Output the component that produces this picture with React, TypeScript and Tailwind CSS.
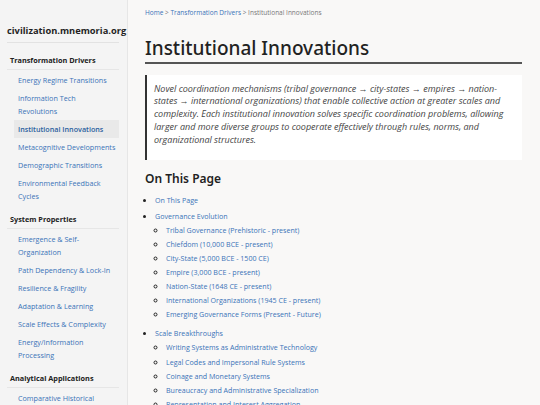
import React from "react";

const sections: { title: string; items: { label: string; active?: boolean; nowrap?: boolean }[] }[] = [
  {
    title: "Transformation Drivers",
    items: [
      { label: "Energy Regime Transitions" },
      { label: "Information Tech Revolutions" },
      { label: "Institutional Innovations", active: true },
      { label: "Metacognitive Developments", nowrap: true },
      { label: "Demographic Transitions" },
      { label: "Environmental Feedback Cycles" },
    ],
  },
  {
    title: "System Properties",
    items: [
      { label: "Emergence & Self-Organization" },
      { label: "Path Dependency & Lock-In" },
      { label: "Resilience & Fragility" },
      { label: "Adaptation & Learning" },
      { label: "Scale Effects & Complexity" },
      { label: "Energy/Information Processing" },
    ],
  },
  {
    title: "Analytical Applications",
    items: [{ label: "Comparative Historical Analysis" }],
  },
];

const toc: { label: string; children?: string[] }[] = [
  { label: "On This Page" },
  {
    label: "Governance Evolution",
    children: [
      "Tribal Governance (Prehistoric - present)",
      "Chiefdom (10,000 BCE - present)",
      "City-State (5,000 BCE - 1500 CE)",
      "Empire (3,000 BCE - present)",
      "Nation-State (1648 CE - present)",
      "International Organizations (1945 CE - present)",
      "Emerging Governance Forms (Present - Future)",
    ],
  },
  {
    label: "Scale Breakthroughs",
    children: [
      "Writing Systems as Administrative Technology",
      "Legal Codes and Impersonal Rule Systems",
      "Coinage and Monetary Systems",
      "Bureaucracy and Administrative Specialization",
      "Representation and Interest Aggregation",
    ],
  },
];

export default function App() {
  return (
    <div
      className="flex w-[540px] h-[405px] overflow-hidden bg-[#f9f8f7]"
      style={{ fontFamily: '"Open Sans", "Noto Sans", sans-serif' }}
    >
      <aside className="w-[128px] shrink-0 h-full bg-[#f4f4f4] border-r border-[#e6e6e6] pl-[7px] pr-[8px] pt-[23px] overflow-hidden">
        <div className="text-[9.3px] font-bold text-[#1f1f1f] leading-[16px] pb-[3px] border-b border-[#e2e2e2] whitespace-nowrap">
          civilization.mnemoria.org
        </div>
        {sections.map((s, i) => (
          <div key={s.title}>
            <div
              className={
                (i === 0 ? "mt-[11px] " : "mt-[8px] ") +
                "text-[7.3px] font-bold text-[#222] leading-[12px] pb-[3px] border-b border-[#e6e6e6] pl-[3px]"
              }
            >
              {s.title}
            </div>
            <ul className="mt-[1px] ml-[7px]">
              {s.items.map((it) => (
                <li
                  key={it.label}
                  className={
                    "text-[7.2px] leading-[13px] py-[2.5px] pl-[4px] pr-[4px] " +
                    (it.nowrap ? "whitespace-nowrap " : "") +
                    (it.active ? "bg-[#e9e9e9] text-[#2b5f9e] font-semibold" : "text-[#3a73b8]")
                  }
                >
                  {it.label}
                </li>
              ))}
            </ul>
          </div>
        ))}
      </aside>
      <main className="flex-1 pl-[17px] pr-[18px] pt-[8px] overflow-hidden">
        <div className="text-[6.5px] leading-[10px] text-[#777]">
          <span className="text-[#3a73b8]">Home</span> &gt;{" "}
          <span className="text-[#3a73b8]">Transformation Drivers</span> &gt; Institutional Innovations
        </div>
        <h1
          className="mt-[18px] text-[19px] leading-[24px] font-medium text-[#222] pb-[2px] border-b-2 border-[#555]"
          style={{ fontFamily: '"Noto Sans", "Open Sans", sans-serif' }}
        >
          Institutional Innovations
        </h1>
        <blockquote className="mt-[11px] bg-white border-l-2 border-[#333] pl-[7px] pr-[12px] pt-[7.5px] pb-[14px] italic text-[9px] leading-[12.8px] text-[#444]">
          Novel coordination mechanisms (tribal governance → city-states → empires → nation-states → international
          organizations) that enable collective action at greater scales and complexity. Each institutional
          innovation solves specific coordination problems, allowing larger and more diverse groups to cooperate
          effectively through rules, norms, and organizational structures.
        </blockquote>
        <h2
          className="mt-[11px] text-[12px] leading-[16px] font-semibold text-[#222]"
          style={{ fontFamily: '"Noto Sans", "Open Sans", sans-serif' }}
        >
          On This Page
        </h2>
        <ul className="mt-[6px] list-disc pl-[10px] text-[7.1px] text-[#3a73b8] marker:text-[#222]">
          {toc.map((t) => (
            <li key={t.label} className="leading-[14.1px] mb-[1px]">
              {t.label}
              {t.children && (
                <ul className="list-[circle] pl-[11px] mt-0 mb-[5px]">
                  {t.children.map((c) => (
                    <li key={c} className="leading-[14.1px]">
                      {c}
                    </li>
                  ))}
                </ul>
              )}
            </li>
          ))}
        </ul>
      </main>
    </div>
  );
}
